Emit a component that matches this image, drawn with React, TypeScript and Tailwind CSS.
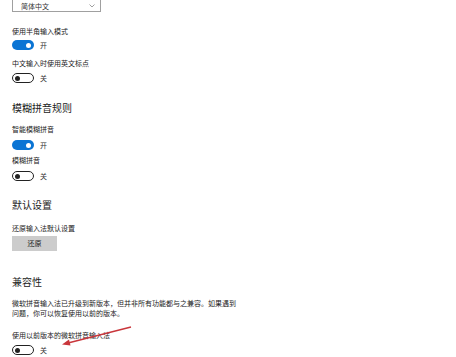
const Toggle = ({ on }: { on: boolean }) => (
  <div className="flex h-[10px] items-center gap-[6px]">
    {on ? (
      <div className="flex h-[10px] w-[22px] items-center justify-end rounded-full bg-[#0a74d4] pr-[3px]">
        <div className="h-[5px] w-[5px] rounded-full bg-white" />
      </div>
    ) : (
      <div className="flex h-[10px] w-[22px] items-center rounded-full border-[1.5px] border-[#222] pl-[2px]">
        <div className="h-[5px] w-[5px] rounded-full bg-[#222]" />
      </div>
    )}
    <span className="text-[7px] leading-[10px] text-[#333]">{on ? '开' : '关'}</span>
  </div>
);

const Label = ({ text, mt }: { text: string; mt: string }) => (
  <p className={`${mt} h-[10px] text-[7px] leading-[10px] text-[#222]`}>{text}</p>
);

export default function App() {
  return (
    <div
      className="relative h-[357px] w-[456px] overflow-hidden bg-white pl-[12px]"
      style={{ fontFamily: '"Noto Sans CJK SC", "Noto Sans", sans-serif' }}
    >
      <div className="flex h-[12px] w-[89px] items-center justify-between border-x border-b border-[#a0a0a0] pl-[8px] pr-[5px]">
        <span className="text-[7px] leading-[10px] text-[#333]">简体中文</span>
        <svg width="6" height="4" viewBox="0 0 6 4">
          <path d="M0.5 0.5 L3 3 L5.5 0.5" fill="none" stroke="#888" strokeWidth="0.8" />
        </svg>
      </div>

      <Label mt="mt-[14px]" text="使用半角输入模式" />
      <div className="mt-[4px]">
        <Toggle on />
      </div>
      <Label mt="mt-[8px]" text="中文输入时使用英文标点" />
      <div className="mt-[5px]">
        <Toggle on={false} />
      </div>

      <h2 className="mt-[19px] h-[12px] text-[10px] leading-[12px] text-[#222]">模糊拼音规则</h2>
      <Label mt="mt-[10px]" text="智能模糊拼音" />
      <div className="mt-[6px]">
        <Toggle on />
      </div>
      <Label mt="mt-[5px]" text="模糊拼音" />
      <div className="mt-[6px]">
        <Toggle on={false} />
      </div>

      <h2 className="mt-[18px] h-[12px] text-[10px] leading-[12px] text-[#222]">默认设置</h2>
      <Label mt="mt-[12px]" text="还原输入法默认设置" />
      <button className="mt-[3px] flex h-[15px] w-[45px] items-center justify-center bg-[#cccccc] text-[7px] text-[#222]">
        还原
      </button>

      <h2 className="mt-[25px] h-[12px] text-[10px] leading-[12px] text-[#222]">兼容性</h2>
      <p className="mt-[10px] whitespace-nowrap text-[7px] leading-[10px] text-[#222]">
        微软拼音输入法已升级到新版本，但并非所有功能都与之兼容。如果遇到
        <br />
        问题，你可以恢复使用以前的版本。
      </p>
      <Label mt="mt-[12px]" text="使用以前版本的微软拼音输入法" />
      <div className="mt-[5px]">
        <Toggle on={false} />
      </div>

      <svg className="absolute left-0 top-0" width="456" height="357" viewBox="0 0 456 357">
        <line x1="131" y1="327" x2="68" y2="343" stroke="#c9363b" strokeWidth="1.3" />
        <path d="M62 344.5 L69 339.5 L70.5 345.5 Z" fill="#c9363b" />
      </svg>
    </div>
  );
}
